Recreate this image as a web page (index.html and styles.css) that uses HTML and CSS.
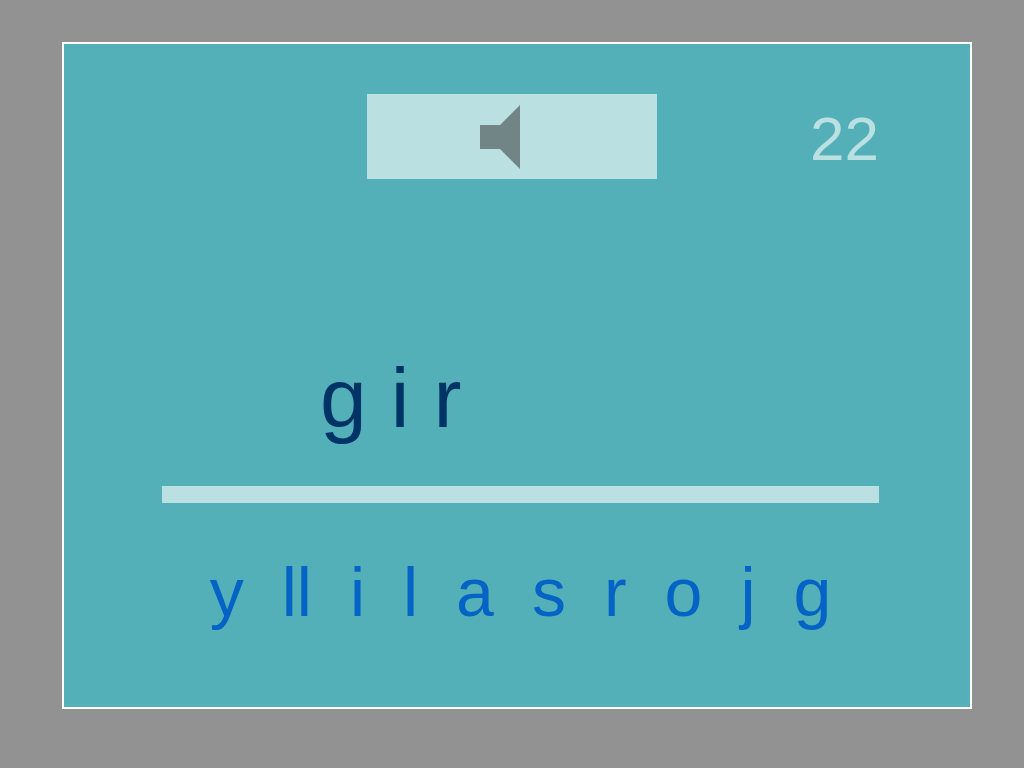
FILE: index.html
```html
<!DOCTYPE html>
<html lang="ca">
<head>
  <meta charset="UTF-8">
  <meta name="viewport" content="width=device-width, initial-scale=1">
  <title>Lletres</title>
  <link rel="stylesheet" href="styles.css">
</head>
<body>
  <main class="board">
    <header class="top">
      <button class="sound" type="button" aria-label="Escolta">
        <svg class="speaker" viewBox="0 0 40 64" aria-hidden="true">
          <path d="M0 20h20L40 0v64L20 44H0z"/>
        </svg>
      </button>
      <span class="counter">22</span>
    </header>

    <div class="answer">
      <span>g</span>
      <span>i</span>
      <span>r</span>
    </div>

    <div class="line"></div>

    <div class="letters">
      <button type="button">y</button>
      <button type="button">ll</button>
      <button type="button">i</button>
      <button type="button">l</button>
      <button type="button">a</button>
      <button type="button">s</button>
      <button type="button">r</button>
      <button type="button">o</button>
      <button type="button">j</button>
      <button type="button">g</button>
    </div>
  </main>
</body>
</html>
```

FILE: styles.css
```css
* {
  box-sizing: border-box;
}

body {
  margin: 0;
  min-height: 100vh;
  padding: 42px 52px 59px 62px;
  display: flex;
  background-color: #929292;
  font-family: "Liberation Sans", Arial, sans-serif;
}

button {
  border: none;
  padding: 0;
  background: none;
  color: inherit;
  font: inherit;
  cursor: pointer;
}

.board {
  flex: 1;
  display: flex;
  flex-direction: column;
  padding: 50px 91px 76px 81px;
  border: 2px solid #fff;
  background-color: #54b0b8;
}

.top {
  display: grid;
  grid-template-columns: 1fr 290px 1fr;
  align-items: start;
}

.sound {
  grid-column: 2;
  height: 85px;
  background-color: #bae0e2;
}

.speaker {
  display: block;
  width: 40px;
  height: 64px;
  margin-left: 113px;
  fill: #718587;
}

.counter {
  justify-self: end;
  color: #bae0e2;
  font-size: 62px;
  line-height: 90px;
}

.answer {
  display: flex;
  gap: 24px;
  margin: auto 0 40px 175px;
  color: #003366;
  font-size: 84px;
  line-height: 96px;
}

.line {
  height: 17px;
  margin-left: 17px;
  background-color: #bae0e2;
}

.letters {
  display: flex;
  gap: 38px;
  justify-content: center;
  margin: 50px 0 0 17px;
  color: #0563c5;
  font-size: 68px;
  line-height: 78px;
}
```
